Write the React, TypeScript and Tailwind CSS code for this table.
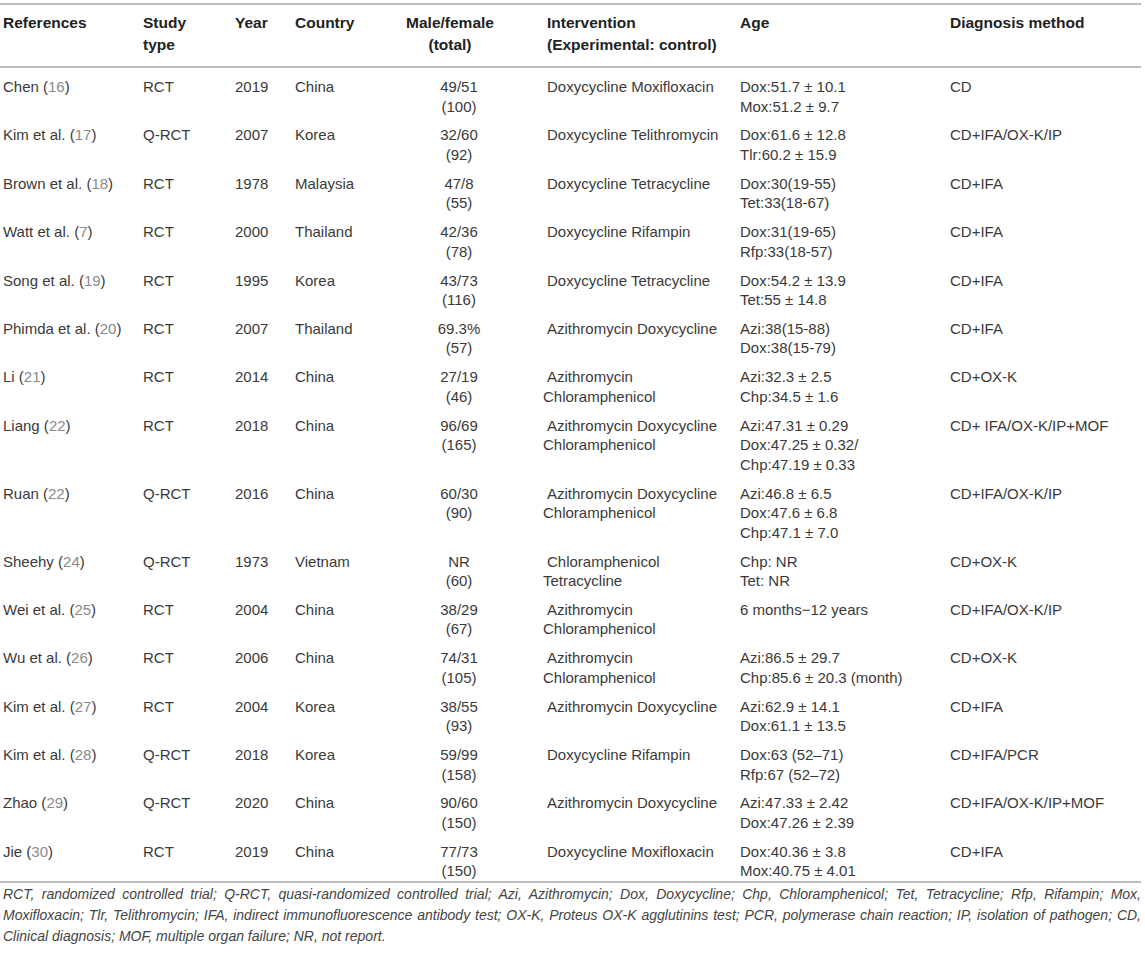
import React from 'react';

type Row = {
  ref: string;
  num: string;
  type: string;
  year: string;
  country: string;
  sex: string;
  total: string;
  drugs: string;
  age: string[];
  dx: string;
};

const rows: Row[] = [
  { ref: 'Chen', num: '16', type: 'RCT', year: '2019', country: 'China', sex: '49/51', total: '(100)', drugs: 'Doxycycline Moxifloxacin', age: ['Dox:51.7 ± 10.1', 'Mox:51.2 ± 9.7'], dx: 'CD' },
  { ref: 'Kim et al.', num: '17', type: 'Q-RCT', year: '2007', country: 'Korea', sex: '32/60', total: '(92)', drugs: 'Doxycycline Telithromycin', age: ['Dox:61.6 ± 12.8', 'Tlr:60.2 ± 15.9'], dx: 'CD+IFA/OX-K/IP' },
  { ref: 'Brown et al.', num: '18', type: 'RCT', year: '1978', country: 'Malaysia', sex: '47/8', total: '(55)', drugs: 'Doxycycline Tetracycline', age: ['Dox:30(19-55)', 'Tet:33(18-67)'], dx: 'CD+IFA' },
  { ref: 'Watt et al.', num: '7', type: 'RCT', year: '2000', country: 'Thailand', sex: '42/36', total: '(78)', drugs: 'Doxycycline Rifampin', age: ['Dox:31(19-65)', 'Rfp:33(18-57)'], dx: 'CD+IFA' },
  { ref: 'Song et al.', num: '19', type: 'RCT', year: '1995', country: 'Korea', sex: '43/73', total: '(116)', drugs: 'Doxycycline Tetracycline', age: ['Dox:54.2 ± 13.9', 'Tet:55 ± 14.8'], dx: 'CD+IFA' },
  { ref: 'Phimda et al.', num: '20', type: 'RCT', year: '2007', country: 'Thailand', sex: '69.3%', total: '(57)', drugs: 'Azithromycin Doxycycline', age: ['Azi:38(15-88)', 'Dox:38(15-79)'], dx: 'CD+IFA' },
  { ref: 'Li', num: '21', type: 'RCT', year: '2014', country: 'China', sex: '27/19', total: '(46)', drugs: 'Azithromycin Chloramphenicol', age: ['Azi:32.3 ± 2.5', 'Chp:34.5 ± 1.6'], dx: 'CD+OX-K' },
  { ref: 'Liang', num: '22', type: 'RCT', year: '2018', country: 'China', sex: '96/69', total: '(165)', drugs: 'Azithromycin Doxycycline Chloramphenicol', age: ['Azi:47.31 ± 0.29', 'Dox:47.25 ± 0.32/', 'Chp:47.19 ± 0.33'], dx: 'CD+ IFA/OX-K/IP+MOF' },
  { ref: 'Ruan', num: '22', type: 'Q-RCT', year: '2016', country: 'China', sex: '60/30', total: '(90)', drugs: 'Azithromycin Doxycycline Chloramphenicol', age: ['Azi:46.8 ± 6.5', 'Dox:47.6 ± 6.8', 'Chp:47.1 ± 7.0'], dx: 'CD+IFA/OX-K/IP' },
  { ref: 'Sheehy', num: '24', type: 'Q-RCT', year: '1973', country: 'Vietnam', sex: 'NR', total: '(60)', drugs: 'Chloramphenicol Tetracycline', age: ['Chp: NR', 'Tet: NR'], dx: 'CD+OX-K' },
  { ref: 'Wei et al.', num: '25', type: 'RCT', year: '2004', country: 'China', sex: '38/29', total: '(67)', drugs: 'Azithromycin Chloramphenicol', age: ['6 months−12 years'], dx: 'CD+IFA/OX-K/IP' },
  { ref: 'Wu et al.', num: '26', type: 'RCT', year: '2006', country: 'China', sex: '74/31', total: '(105)', drugs: 'Azithromycin Chloramphenicol', age: ['Azi:86.5 ± 29.7', 'Chp:85.6 ± 20.3 (month)'], dx: 'CD+OX-K' },
  { ref: 'Kim et al.', num: '27', type: 'RCT', year: '2004', country: 'Korea', sex: '38/55', total: '(93)', drugs: 'Azithromycin Doxycycline', age: ['Azi:62.9 ± 14.1', 'Dox:61.1 ± 13.5'], dx: 'CD+IFA' },
  { ref: 'Kim et al.', num: '28', type: 'Q-RCT', year: '2018', country: 'Korea', sex: '59/99', total: '(158)', drugs: 'Doxycycline Rifampin', age: ['Dox:63 (52–71)', 'Rfp:67 (52–72)'], dx: 'CD+IFA/PCR' },
  { ref: 'Zhao', num: '29', type: 'Q-RCT', year: '2020', country: 'China', sex: '90/60', total: '(150)', drugs: 'Azithromycin Doxycycline', age: ['Azi:47.33 ± 2.42', 'Dox:47.26 ± 2.39'], dx: 'CD+IFA/OX-K/IP+MOF' },
  { ref: 'Jie', num: '30', type: 'RCT', year: '2019', country: 'China', sex: '77/73', total: '(150)', drugs: 'Doxycycline Moxifloxacin', age: ['Dox:40.36 ± 3.8', 'Mox:40.75 ± 4.01'], dx: 'CD+IFA' },
];

const cols = 'grid grid-cols-[143px_92px_60px_100px_148px_197px_210px_191px]';

export default function App() {
  return (
    <div className="min-h-screen bg-white pt-[3px] text-[#3a3a3a]" style={{ fontFamily: '"Liberation Sans", Arial, Helvetica, sans-serif' }}>
      <div className="w-[1141px]">
        <div className="h-[2px] bg-[#bdbdbd]" />
        <div className={`${cols} pt-[7px] pb-[10px] text-[15.5px] font-bold leading-[22px] text-[#222]`}>
          <div className="pl-[3px]">References</div>
          <div>Study<br />type</div>
          <div>Year</div>
          <div>Country</div>
          <div className="pr-[38px] text-center">Male/female<br />(total)</div>
          <div className="pl-[4px]">Intervention<br />(Experimental: control)</div>
          <div>Age</div>
          <div>Diagnosis method</div>
        </div>
        <div className="h-[2px] bg-[#bdbdbd]" />

        {rows.map((r, i) => (
          <div key={i} className={`${cols} pt-[9px] pb-[0.4px] text-[15px] leading-[19.5px]`}>
            <div className="pl-[3px]">
              {r.ref} (<span className="text-[#8a8a8a]">{r.num}</span>)
            </div>
            <div>{r.type}</div>
            <div>{r.year}</div>
            <div>{r.country}</div>
            <div className="pr-[20px] text-center">
              <div>{r.sex}</div>
              <div>{r.total}</div>
            </div>
            <div className="indent-[4px]">{r.drugs}</div>
            <div>
              {r.age.map((a, j) => (
                <div key={j}>{a}</div>
              ))}
            </div>
            <div>{r.dx}</div>
          </div>
        ))}

        <div className="h-[2px] bg-[#bdbdbd]" />
        <div className="pt-[1px] pl-[3px] text-[14px] italic leading-[21px] text-[#444]">
          <div className="text-justify [text-align-last:justify]">
            RCT, randomized controlled trial; Q-RCT, quasi-randomized controlled trial; Azi, Azithromycin; Dox, Doxycycline; Chp, Chloramphenicol; Tet, Tetracycline; Rfp, Rifampin; Mox,
          </div>
          <div className="text-justify [text-align-last:justify]">
            Moxifloxacin; Tlr, Telithromycin; IFA, indirect immunofluorescence antibody test; OX-K, Proteus OX-K agglutinins test; PCR, polymerase chain reaction; IP, isolation of pathogen; CD,
          </div>
          <div>Clinical diagnosis; MOF, multiple organ failure; NR, not report.</div>
        </div>
      </div>
    </div>
  );
}
